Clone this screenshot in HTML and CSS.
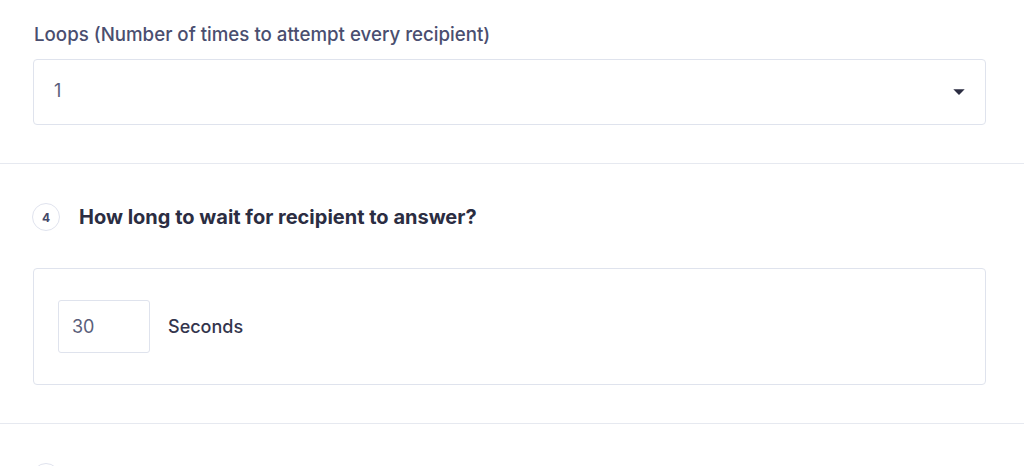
FILE: index.html
```html
<!DOCTYPE html>
<html>
<head>
<meta charset="utf-8">
<link rel="stylesheet" href="styles.css">
</head>
<body>
<section class="section first">
  <div class="field-label">Loops (Number of times to attempt every recipient)</div>
  <div class="select">
    <span class="select-value">1</span>
    <svg class="caret" width="12" height="6" viewBox="0 0 12 6"><path d="M0.3 0.3 H11.7 L6 5.9 Z" fill="#2b2d42"/></svg>
  </div>
</section>
<section class="section">
  <div class="step-head">
    <span class="step-num">4</span>
    <h2 class="step-title">How long to wait for recipient to answer?</h2>
  </div>
  <div class="card">
    <div class="num-input">30</div>
    <span class="unit">Seconds</span>
  </div>
</section>
<section class="section last">
  <div class="step-head">
    <span class="step-num"></span>
  </div>
</section>
</body>
</html>
```
FILE: styles.css
```css
html, body {
  margin: 0;
  padding: 0;
  background: #ffffff;
  font-family: Inter, "Noto Sans", sans-serif;
  overflow: hidden;
}
.section {
  padding: 39px 38px 38px 33px;
  border-bottom: 1px solid #e6e9f0;
}
.section.first {
  padding-top: 22px;
}
.section.last {
  border-bottom: none;
}
.field-label {
  font-size: 18.7px;
  line-height: 26px;
  font-weight: 500;
  color: #4a4e6f;
  margin-left: 1px;
}
.select {
  margin-top: 11px;
  box-sizing: border-box;
  height: 66px;
  border: 1px solid #dfe3ed;
  border-radius: 4px;
  display: flex;
  align-items: center;
  justify-content: space-between;
  padding: 0 20px 3px 20px;
}
.select-value {
  font-size: 18px;
  color: #5a5e7a;
}
.caret {
  display: block;
  margin-top: 2px;
}
.step-head {
  display: flex;
  align-items: center;
  gap: 19px;
  height: 28px;
}
.step-num {
  box-sizing: border-box;
  width: 28px;
  height: 28px;
  border: 1px solid #e0e3ee;
  border-radius: 50%;
  display: flex;
  align-items: center;
  justify-content: center;
  font-size: 12px;
  font-weight: 700;
  color: #454868;
  margin-left: -1px;
}
.step-title {
  margin: 0;
  font-size: 20px;
  line-height: 23px;
  font-weight: 700;
  color: #2b2d42;
}
.card {
  margin-top: 37px;
  border: 1px solid #dfe3ed;
  border-radius: 4px;
  padding: 31px 24px;
  display: flex;
  align-items: center;
  gap: 18px;
}
.num-input {
  box-sizing: border-box;
  width: 92px;
  height: 53px;
  border: 1px solid #dfe3ed;
  border-radius: 3px;
  display: flex;
  align-items: center;
  padding-left: 13px;
  font-size: 18px;
  color: #5a5e7a;
}
.unit {
  font-size: 18px;
  font-weight: 500;
  color: #33354d;
}
```
